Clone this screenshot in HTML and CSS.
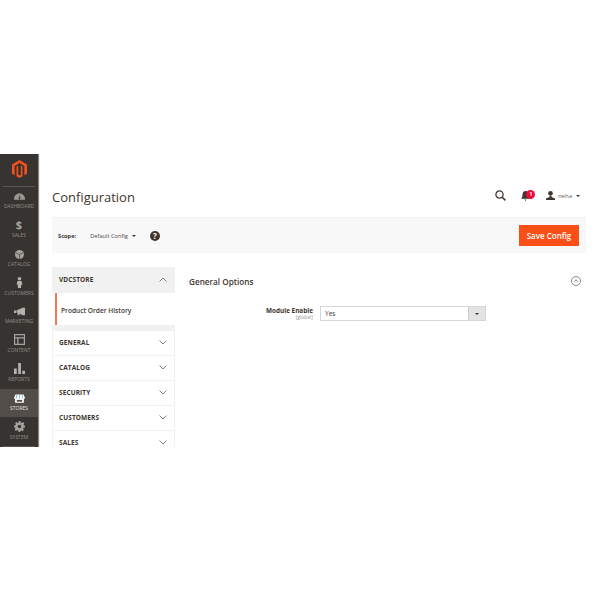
FILE: index.html
```html
<!DOCTYPE html>
<html lang="en">
<head>
<meta charset="utf-8">
<title>Configuration</title>
<link rel="stylesheet" href="styles.css">
</head>
<body>
<div class="app">
  <nav class="menu">
    <div class="logo">
      <svg width="15" height="18" viewBox="0 0 16 19"><path fill="#f4511e" d="M8 0 16 4.600V14.500L13.200 16.100V6.200L8 3.200 2.800 6.200V16.100L0 14.500V4.600Z"/><path fill="#f4511e" d="M4.800 6.900 6.600 5.900V15.500L8 16.300 9.400 15.500V5.900L11.200 6.900V17.200L8 19 4.800 17.200Z"/></svg>
    </div>
    <a class="item"><svg class="ic" viewBox="0 0 12 7"><path fill="#9b9793" d="M6 0a6 6 0 0 0-6 6v1h12V6a6 6 0 0 0-6-6Zm-.7 5 1.200-3.500.4 3.700a.9.900 0 1 1-1.600-.2Z"/></svg><span>DASHBOARD</span></a>
    <a class="item"><span class="dollar">$</span><span>SALES</span></a>
    <a class="item"><svg class="ic" viewBox="0 0 10 10"><circle cx="5" cy="5" r="5" fill="#a5a19d"/><path d="M5 5 1 3M5 5l4-2M5 5v5" stroke="#373330" stroke-width=".7"/></svg><span>CATALOG</span></a>
    <a class="item"><svg class="ic tall" viewBox="0 0 7 11"><circle cx="3.500" cy="1.800" r="1.800" fill="#b5b1ad"/><path fill="#b5b1ad" d="M1.500 4h4L6.500 7.500H5.300L5 11H2L1.700 7.500H.5Z"/></svg><span>CUSTOMERS</span></a>
    <a class="item"><svg class="ic" viewBox="0 0 12 8"><path fill="#b5b1ad" d="M0 3h2.500v2.500H0ZM3 2.700 9.500 0H12V8H9.500L6 6.300V8H4V5.500L3 5.200Z"/></svg><span>MARKETING</span></a>
    <a class="item"><svg class="ic tall" viewBox="0 0 11 11"><path fill="#a5a19d" fill-rule="evenodd" d="M0 0h11v11H0Zm1.200 1.200v2h8.600v-2Zm0 3.300v5.300h2V4.500Zm3.300 0v5.300h5.300V4.500Z"/></svg><span>CONTENT</span></a>
    <a class="item"><svg class="ic tall" viewBox="0 0 10 10"><path fill="#b5b1ad" d="M0 5h2.500v5H0ZM3.800 0h2.500v10H3.800ZM7.500 7H10v3H7.500Z"/></svg><span>REPORTS</span></a>
    <a class="item current"><svg class="ic" viewBox="0 0 12 9"><path fill="#fff" d="M1.500 0h9L12 4a1.400 1.400 0 0 1-1.200 1V9H1.200V5A1.400 1.400 0 0 1 0 4Z"/><path stroke="#7fa6c9" stroke-width=".9" d="M3 .5 2.400 4.500M6 .5v4M9 .5l.6 4"/><path fill="#524d49" d="M3 6h6v2H3Z"/></svg><span>STORES</span></a>
    <a class="item"><svg class="ic tall" viewBox="0 0 12 12"><path fill="#a5a19d" fill-rule="evenodd" d="M5 0h2l.3 1.600 1.200.5L9.900 1.200l1.400 1.400-.9 1.400.5 1.200L12 5v2l-1.600.3-.5 1.200.9 1.400-1.400 1.400-1.400-.9-1.200.5L7 12H5l-.3-1.600-1.200-.5-1.400.9L.7 9.400l.9-1.400-.5-1.200L0 7V5l1.600-.3.5-1.200-.9-1.400L2.600 1.200l1.400.9 1.200-.5ZM6 4a2 2 0 1 0 0 4 2 2 0 0 0 0-4Z"/></svg><span>SYSTEM</span></a>
    <div class="menu-end"></div>
  </nav>
  <main class="page">
    <header class="head">
      <h1 class="title">Configuration</h1>
      <div class="actions">
        <svg class="search" width="11" height="11" viewBox="0 0 11 11"><circle cx="4.500" cy="4.500" r="3.600" fill="none" stroke="#41362f" stroke-width="1.300"/><path d="M7.200 7.200 10.400 10.400" stroke="#41362f" stroke-width="1.500"/></svg>
        <div class="bell">
          <svg width="9" height="10" viewBox="0 0 9 10"><path fill="#41362f" d="M4.500 0C2.500 0 1.500 1.500 1.500 4 1.500 6 .8 7 0 7.800h9C8.200 7 7.500 6 7.500 4 7.500 1.500 6.500 0 4.500 0ZM3.500 8.500h2L4.500 10Z"/></svg>
          <span class="badge">1</span>
        </div>
        <div class="user">
          <svg width="9" height="9" viewBox="0 0 9 9"><circle cx="4.500" cy="2.300" r="2.300" fill="#41362f"/><path fill="#41362f" d="M3.500 4.500h2V6L9 7.500V9H0V7.500L3.500 6Z"/></svg>
          <span class="user-name">neha</span>
          <i class="caret"></i>
        </div>
      </div>
    </header>
    <section class="scope">
      <b class="scope-label">Scope:</b>
      <span class="scope-value">Default Config</span>
      <i class="caret"></i>
      <span class="help">?</span>
      <button class="save">Save Config</button>
    </section>
    <div class="columns">
      <aside class="tabs">
        <div class="group open"><span>VDCSTORE</span><svg class="chev" viewBox="0 0 8 5"><path d="M.5 4.500 4 1l3.500 3.500" fill="none" stroke="#6b625b" stroke-width=".8"/></svg></div>
        <div class="sub"><span>Product Order History</span></div>
        <div class="strip"></div>
        <div class="group"><span>GENERAL</span><svg class="chev" viewBox="0 0 8 5"><path d="M.5.500 4 4 7.500.5" fill="none" stroke="#6b625b" stroke-width=".8"/></svg></div>
        <div class="group"><span>CATALOG</span><svg class="chev" viewBox="0 0 8 5"><path d="M.5.500 4 4 7.500.5" fill="none" stroke="#6b625b" stroke-width=".8"/></svg></div>
        <div class="group"><span>SECURITY</span><svg class="chev" viewBox="0 0 8 5"><path d="M.5.500 4 4 7.500.5" fill="none" stroke="#6b625b" stroke-width=".8"/></svg></div>
        <div class="group"><span>CUSTOMERS</span><svg class="chev" viewBox="0 0 8 5"><path d="M.5.500 4 4 7.500.5" fill="none" stroke="#6b625b" stroke-width=".8"/></svg></div>
        <div class="group"><span>SALES</span><svg class="chev" viewBox="0 0 8 5"><path d="M.5.500 4 4 7.500.5" fill="none" stroke="#6b625b" stroke-width=".8"/></svg></div>
      </aside>
      <section class="panel">
        <div class="panel-head">
          <h2 class="panel-title">General Options</h2>
          <svg width="10" height="10" viewBox="0 0 10 10"><circle cx="5" cy="5" r="4.500" fill="none" stroke="#6e6e6e" stroke-width=".8"/><path d="M3 5.800 5 3.800l2 2" fill="none" stroke="#6e6e6e" stroke-width=".8"/></svg>
        </div>
        <div class="field">
          <div class="field-label"><b>Module Enable</b><small>[global]</small></div>
          <div class="select"><span class="select-value">Yes</span><span class="select-arrow"><i class="caret small"></i></span></div>
        </div>
      </section>
    </div>
  </main>
</div>
</body>
</html>
```
FILE: styles.css
```css
* { box-sizing: border-box; }
html, body { margin: 0; background: #fff; }
body { font-family: "Open Sans", sans-serif; color: #41362f; padding-top: 154px; }
.app { display: flex; height: 293px; overflow: hidden; }
.menu { width: 38px; flex: none; background: #373330; display: flex; flex-direction: column; box-shadow: 1px 0 1px #8a8785; }
.logo { height: 33px; flex: none; display: flex; justify-content: center; padding-top: 6px; position: relative; }
.logo::after { content: ""; position: absolute; left: 3px; right: 3px; bottom: 0; height: 1px; background: #5a5653; }
.item { height: 28.8px; flex: none; display: flex; flex-direction: column; align-items: center; justify-content: flex-end; padding-bottom: 6.500px; gap: 2px; font-size: 5px; line-height: 6px; color: #948f8a; white-space: nowrap; }
.item.current { background: #524d49; color: #e6e4e2; }
.ic { width: 11px; height: 9px; display: block; }
.ic.tall { height: 11px; }
.dollar { font-size: 11px; line-height: 10px; font-weight: 700; color: #aaa6a0; }
.menu-end { height: 1px; margin: 0 3px; background: #5a5653; }
.page { flex: 1; padding: 0 14px; min-width: 0; }
.head { height: 63px; display: flex; justify-content: space-between; align-items: flex-start; padding-top: 33px; }
.title { margin: 0; font-size: 13px; line-height: 20px; font-weight: 400; color: #41362f; }
.actions { display: flex; align-items: center; padding-top: 3px; font-size: 6px; color: #676056; }
.search { margin-right: 15px; }
.bell { position: relative; display: flex; margin-right: 16px; }
.badge { position: absolute; left: 5.500px; top: -1px; width: 9px; height: 9px; border-radius: 50%; background: #ec0b3a; color: #fff; font-size: 5px; line-height: 9px; font-weight: 700; text-align: center; }
.user { display: flex; align-items: center; gap: 3px; margin-right: 6px; }
.user-name { margin-right: 1px; }
.caret { display: inline-block; width: 0; height: 0; border: 2px solid transparent; border-top: 2.500px solid #41362f; border-bottom: 0; }
.caret.small { border-width: 2px; border-top-width: 2.500px; border-bottom: 0; }
.scope { height: 36px; background: #f8f8f8; display: flex; align-items: center; padding: 0 7px 0 6px; font-size: 5.700px; border-top: 1px solid #f2f2f2; }
.scope-label { font-weight: 700; margin-right: 14px; }
.scope-value { color: #514943; margin-right: 4px; }
.help { width: 10px; height: 10px; border-radius: 50%; background: #41362f; color: #fff; font-size: 8px; line-height: 10px; font-weight: 700; text-align: center; margin-left: 14px; }
.save { margin-left: auto; width: 60px; height: 21px; border: 0; padding: 0; background: #fa4f17; color: #fff; font: 600 8px "Open Sans", sans-serif; }
.columns { display: flex; padding-top: 14px; gap: 14px; }
.tabs { width: 123px; flex: none; font-size: 6.500px; }
.group { height: 25px; display: flex; align-items: center; justify-content: space-between; padding: 0 7px 2px 6px; font-weight: 700; letter-spacing: .1px; color: #41362f; background: #fff; border: 1px solid #f1f1f1; border-width: 0 1px 1px; }
.group.open { height: 26px; background: #f1f1f1; padding-bottom: 0; }
.chev { width: 8px; height: 5px; }
.sub { height: 32px; margin-left: 3px; padding: 2px 0 0 4px; border-left: 2px solid #ef7a4f; display: flex; align-items: center; font-size: 6.600px; font-weight: 600; }
.strip { height: 6px; background: #f1f1f1; }
.panel { flex: 1; min-width: 0; font-size: 8px; padding-right: 5px; }
.panel-head { display: flex; align-items: center; justify-content: space-between; height: 28px; }
.panel-title { margin: 0; font-size: 8.200px; font-weight: 600; color: #41362f; }
.field { display: flex; margin-top: 11px; }
.field-label { width: 124px; text-align: right; display: flex; flex-direction: column; font-size: 6.400px; line-height: 7px; padding-top: 1px; }
.field-label b { font-weight: 700; }
.field-label small { font-size: 5px; line-height: 5px; margin-top: 1px; color: #999; }
.select { width: 166px; height: 15px; margin-left: 7px; border: 1px solid #d6d6d6; display: flex; justify-content: space-between; font-size: 6.500px; }
.select-value { line-height: 13px; padding-left: 4px; }
.select-arrow { width: 17px; background: #e3e3e3; border-left: 1px solid #ccc; display: flex; align-items: center; justify-content: center; }
```
